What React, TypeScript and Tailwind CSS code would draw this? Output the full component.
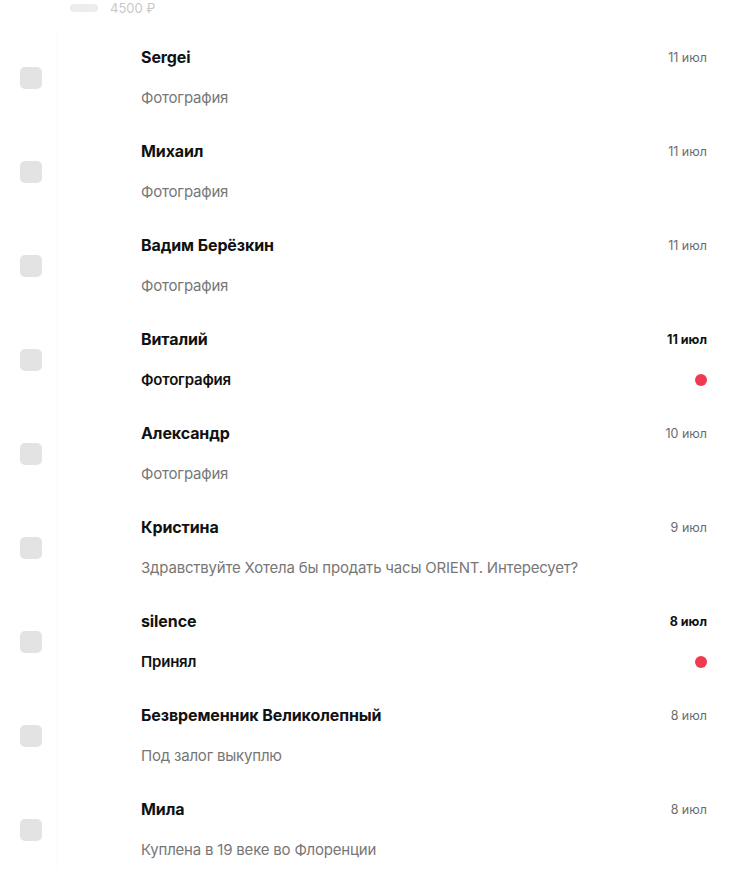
import React from "react";

type Item = { name: string; date: string; text: string; unread?: boolean };

const items: Item[] = [
  { name: "Sergei", date: "11 июл", text: "Фотография" },
  { name: "Михаил", date: "11 июл", text: "Фотография" },
  { name: "Вадим Берёзкин", date: "11 июл", text: "Фотография" },
  { name: "Виталий", date: "11 июл", text: "Фотография", unread: true },
  { name: "Александр", date: "10 июл", text: "Фотография" },
  { name: "Кристина", date: "9 июл", text: "Здравствуйте Хотела бы продать часы ORIENT. Интересует?" },
  { name: "silence", date: "8 июл", text: "Принял", unread: true },
  { name: "Безвременник Великолепный", date: "8 июл", text: "Под залог выкуплю" },
  { name: "Мила", date: "8 июл", text: "Куплена в 19 веке во Флоренции" },
];

function Row({ item }: { item: Item }) {
  return (
    <div className="flex h-[94px] items-center">
      <div className="w-[57px] shrink-0 flex items-center">
        <div className="ml-5 h-[22px] w-[22px] rounded-[5px] bg-[#e3e3e3]" />
      </div>
      <div className="flex-1 h-full border-l border-[#fafafa] pl-[83px] pr-[30px] flex flex-col">
        <div className="flex items-center justify-between h-[20px] mt-[16px]">
          <span className="text-[16px] font-bold text-[#111] tracking-[-0.1px]">{item.name}</span>
          <span
            className={
              item.unread
                ? "mt-[2px] text-[12.5px] font-bold text-[#111]"
                : "mt-[2px] text-[12.5px] text-[#6b6b6b]"
            }
          >
            {item.date}
          </span>
        </div>
        <div className="flex items-center justify-between h-[20px] mt-[21px]">
          <span
            className={
              item.unread
                ? "text-[15px] font-semibold text-[#111] tracking-[-0.2px]"
                : "text-[15px] text-[#777] tracking-[-0.2px]"
            }
          >
            {item.text}
          </span>
          {item.unread && <span className="h-3 w-3 rounded-full bg-[#f03a4f]" />}
        </div>
      </div>
    </div>
  );
}

export default function App() {
  return (
    <div className="w-[737px] h-[869px] overflow-hidden bg-white" style={{ fontFamily: "Inter, 'Noto Sans', sans-serif" }}>
      <div className="h-[31px] flex items-start">
        <div className="ml-[70px] mt-[4px] h-[8px] w-[28px] rounded-full bg-[#ececec]" />
        <span className="ml-[12px] mt-[0px] leading-[16px] text-[13px] text-[#c8c8c8]">4500 ₽</span>
      </div>
      {items.map((it) => (
        <Row key={it.name} item={it} />
      ))}
    </div>
  );
}
